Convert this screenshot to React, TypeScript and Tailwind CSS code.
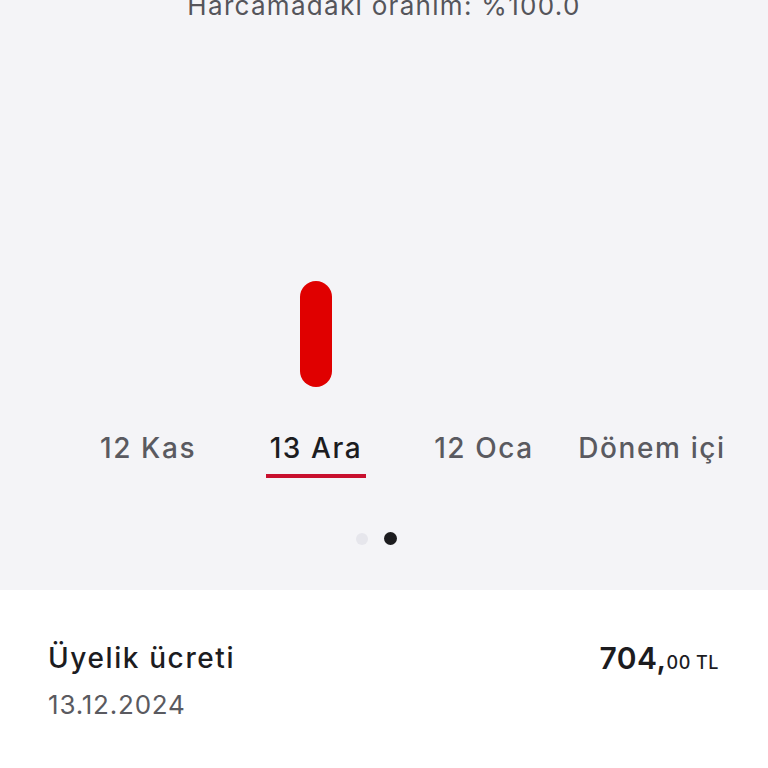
export default function App() {
  const tabs = ['12 Kas', '13 Ara', '12 Oca', 'Dönem içi'];
  const active = 1;

  return (
    <div className="w-[768px] h-[768px] overflow-hidden bg-white font-['Inter',sans-serif]">
      <div className="h-[590px] bg-[#f4f4f7] flex flex-col">
        <p className="-mt-[11px] text-center text-[26px] leading-[34px] text-[#55555b] tracking-[1.3px]">
          Harcamadaki oranım: %100.0
        </p>

        {/* grafik */}
        <div className="mt-[258px] ml-[64px] grid grid-cols-4 w-[672px] h-[106px] items-end">
          <div />
          <div className="flex justify-center">
            <div className="w-[32px] h-[106px] rounded-full bg-[#e00000]" />
          </div>
          <div />
          <div />
        </div>

        <div className="mt-[43px] ml-[64px] grid grid-cols-4 w-[672px]">
          {tabs.map((tab, i) => (
            <div key={tab} className="flex flex-col items-center">
              <span
                className={
                  'text-[28px] leading-[36px] font-medium tracking-[1.6px] ' +
                  (i === active ? 'text-[#1c1c1f]' : 'text-[#5a5a60]')
                }
              >
                {tab}
              </span>
              {i === active ? (
                <div className="mt-[8px] w-[100px] h-[4px] bg-[#c8102e]" />
              ) : (
                <div className="mt-[8px] h-[4px]" />
              )}
            </div>
          ))}
        </div>

        <div className="mt-[54px] flex justify-center items-center gap-[16px] ml-[-16px]">
          <div className="w-[12px] h-[12px] rounded-full bg-[#e6e6ec]" />
          <div className="w-[13px] h-[13px] rounded-full bg-[#1c1c1f]" />
        </div>
      </div>

      <div className="flex justify-between px-[48px] pt-[50px]">
        <div className="flex flex-col">
          <span className="text-[28px] leading-[36px] font-medium text-[#1c1c1f] tracking-[1.6px]">Üyelik ücreti</span>
          <span className="mt-[13px] text-[26px] leading-[32px] text-[#5a5a60] tracking-[0.8px]">13.12.2024</span>
        </div>
        <div className="pr-[1px] text-[#1c1c1f]">
          <span className="text-[30px] leading-[36px] font-semibold tracking-[0.5px]">704,</span>
          <span className="text-[18px] leading-[36px] font-medium tracking-[0.5px]">00 TL</span>
        </div>
      </div>
    </div>
  );
}
